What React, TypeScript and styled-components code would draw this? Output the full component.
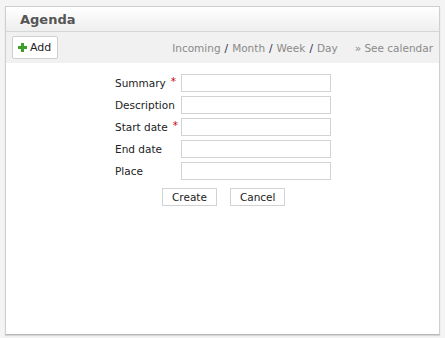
import { Fragment } from "react";
import styled, { createGlobalStyle } from "styled-components";

const GlobalStyle = createGlobalStyle`
  html, body {
    margin: 0;
    padding: 0;
    background: #f4f4f4;
    font-family: "DejaVu Sans", Verdana, sans-serif;
  }
`;

const Page = styled.div`
  width: 445px;
  height: 338px;
  padding: 6px 5px 5px 5px;
  box-sizing: border-box;
`;

const Panel = styled.div`
  height: 327px;
  background: #fff;
  border: 1px solid #cfcfcf;
  border-bottom-color: #b8b8b8;
  box-shadow: 0 1px 1px rgba(0, 0, 0, 0.12);
  display: flex;
  flex-direction: column;
`;

const Header = styled.div`
  height: 24px;
  background: linear-gradient(#ffffff, #eeeeee);
  border-bottom: 1px solid #d6d6d6;
  display: flex;
  align-items: center;
  padding-left: 14px;
  font-size: 13px;
  font-weight: bold;
  color: #555;
`;

const Toolbar = styled.div`
  height: 31px;
  background: #f1f1f1;
  display: flex;
  align-items: center;
  justify-content: space-between;
  padding: 0 6px 0 6px;
`;

const AddButton = styled.button`
  height: 23px;
  padding: 0 6px 0 5px;
  background: #fff;
  border: 1px solid #cfcfcf;
  border-radius: 2px;
  display: flex;
  align-items: center;
  gap: 3px;
  font-family: inherit;
  font-size: 11px;
  color: #222;
`;

const Views = styled.div`
  display: flex;
  align-items: center;
  font-size: 10.5px;
  color: #8a8a8a;
`;

const Slash = styled.span`
  color: #1f2a55;
  margin: 0 4px;
`;

const SeeCal = styled.span`
  margin-left: 17px;
`;

const Form = styled.div`
  display: grid;
  grid-template-columns: 66px 150px;
  row-gap: 4px;
  margin: 11px 0 0 109px;
`;

const Label = styled.label`
  font-size: 10.5px;
  color: #222;
  height: 18px;
  display: flex;
  align-items: center;
`;

const Star = styled.span`
  color: #c00;
  margin-left: 5px;
  position: relative;
  top: -2px;
`;

const Input = styled.input`
  height: 18px;
  box-sizing: border-box;
  border: 1px solid #d2d2d2;
  margin: 0;
  padding: 0;
`;

const Actions = styled.div`
  display: flex;
  gap: 13px;
  margin: 8px 0 0 156px;
`;

const Btn = styled.button`
  height: 18px;
  padding: 0 9px;
  background: #fff;
  border: 1px solid #d2d2d2;
  font-family: inherit;
  font-size: 10.5px;
  color: #222;
`;

const fields: { label: string; required?: boolean }[] = [
  { label: "Summary", required: true },
  { label: "Description" },
  { label: "Start date", required: true },
  { label: "End date" },
  { label: "Place" },
];

const PlusIcon = () => (
  <svg width="9" height="9" viewBox="0 0 9 9">
    <path d="M3 0h3v3h3v3H6v3H3V6H0V3h3z" fill="#3aa02a" />
  </svg>
);

const App = () => {
  return (
    <Page>
      <GlobalStyle />
      <Panel>
        <Header>Agenda</Header>
        <Toolbar>
          <AddButton>
            <PlusIcon />
            Add
          </AddButton>
          <Views>
            Incoming<Slash>/</Slash>Month<Slash>/</Slash>Week<Slash>/</Slash>Day
            <SeeCal>» See calendar</SeeCal>
          </Views>
        </Toolbar>
        <Form>
          {fields.map((f) => (
            <Fragment key={f.label}>
              <Label>
                {f.label}
                {f.required && <Star>*</Star>}
              </Label>
              <Input />
            </Fragment>
          ))}
        </Form>
        <Actions>
          <Btn>Create</Btn>
          <Btn>Cancel</Btn>
        </Actions>
      </Panel>
    </Page>
  );
};

export default App;
